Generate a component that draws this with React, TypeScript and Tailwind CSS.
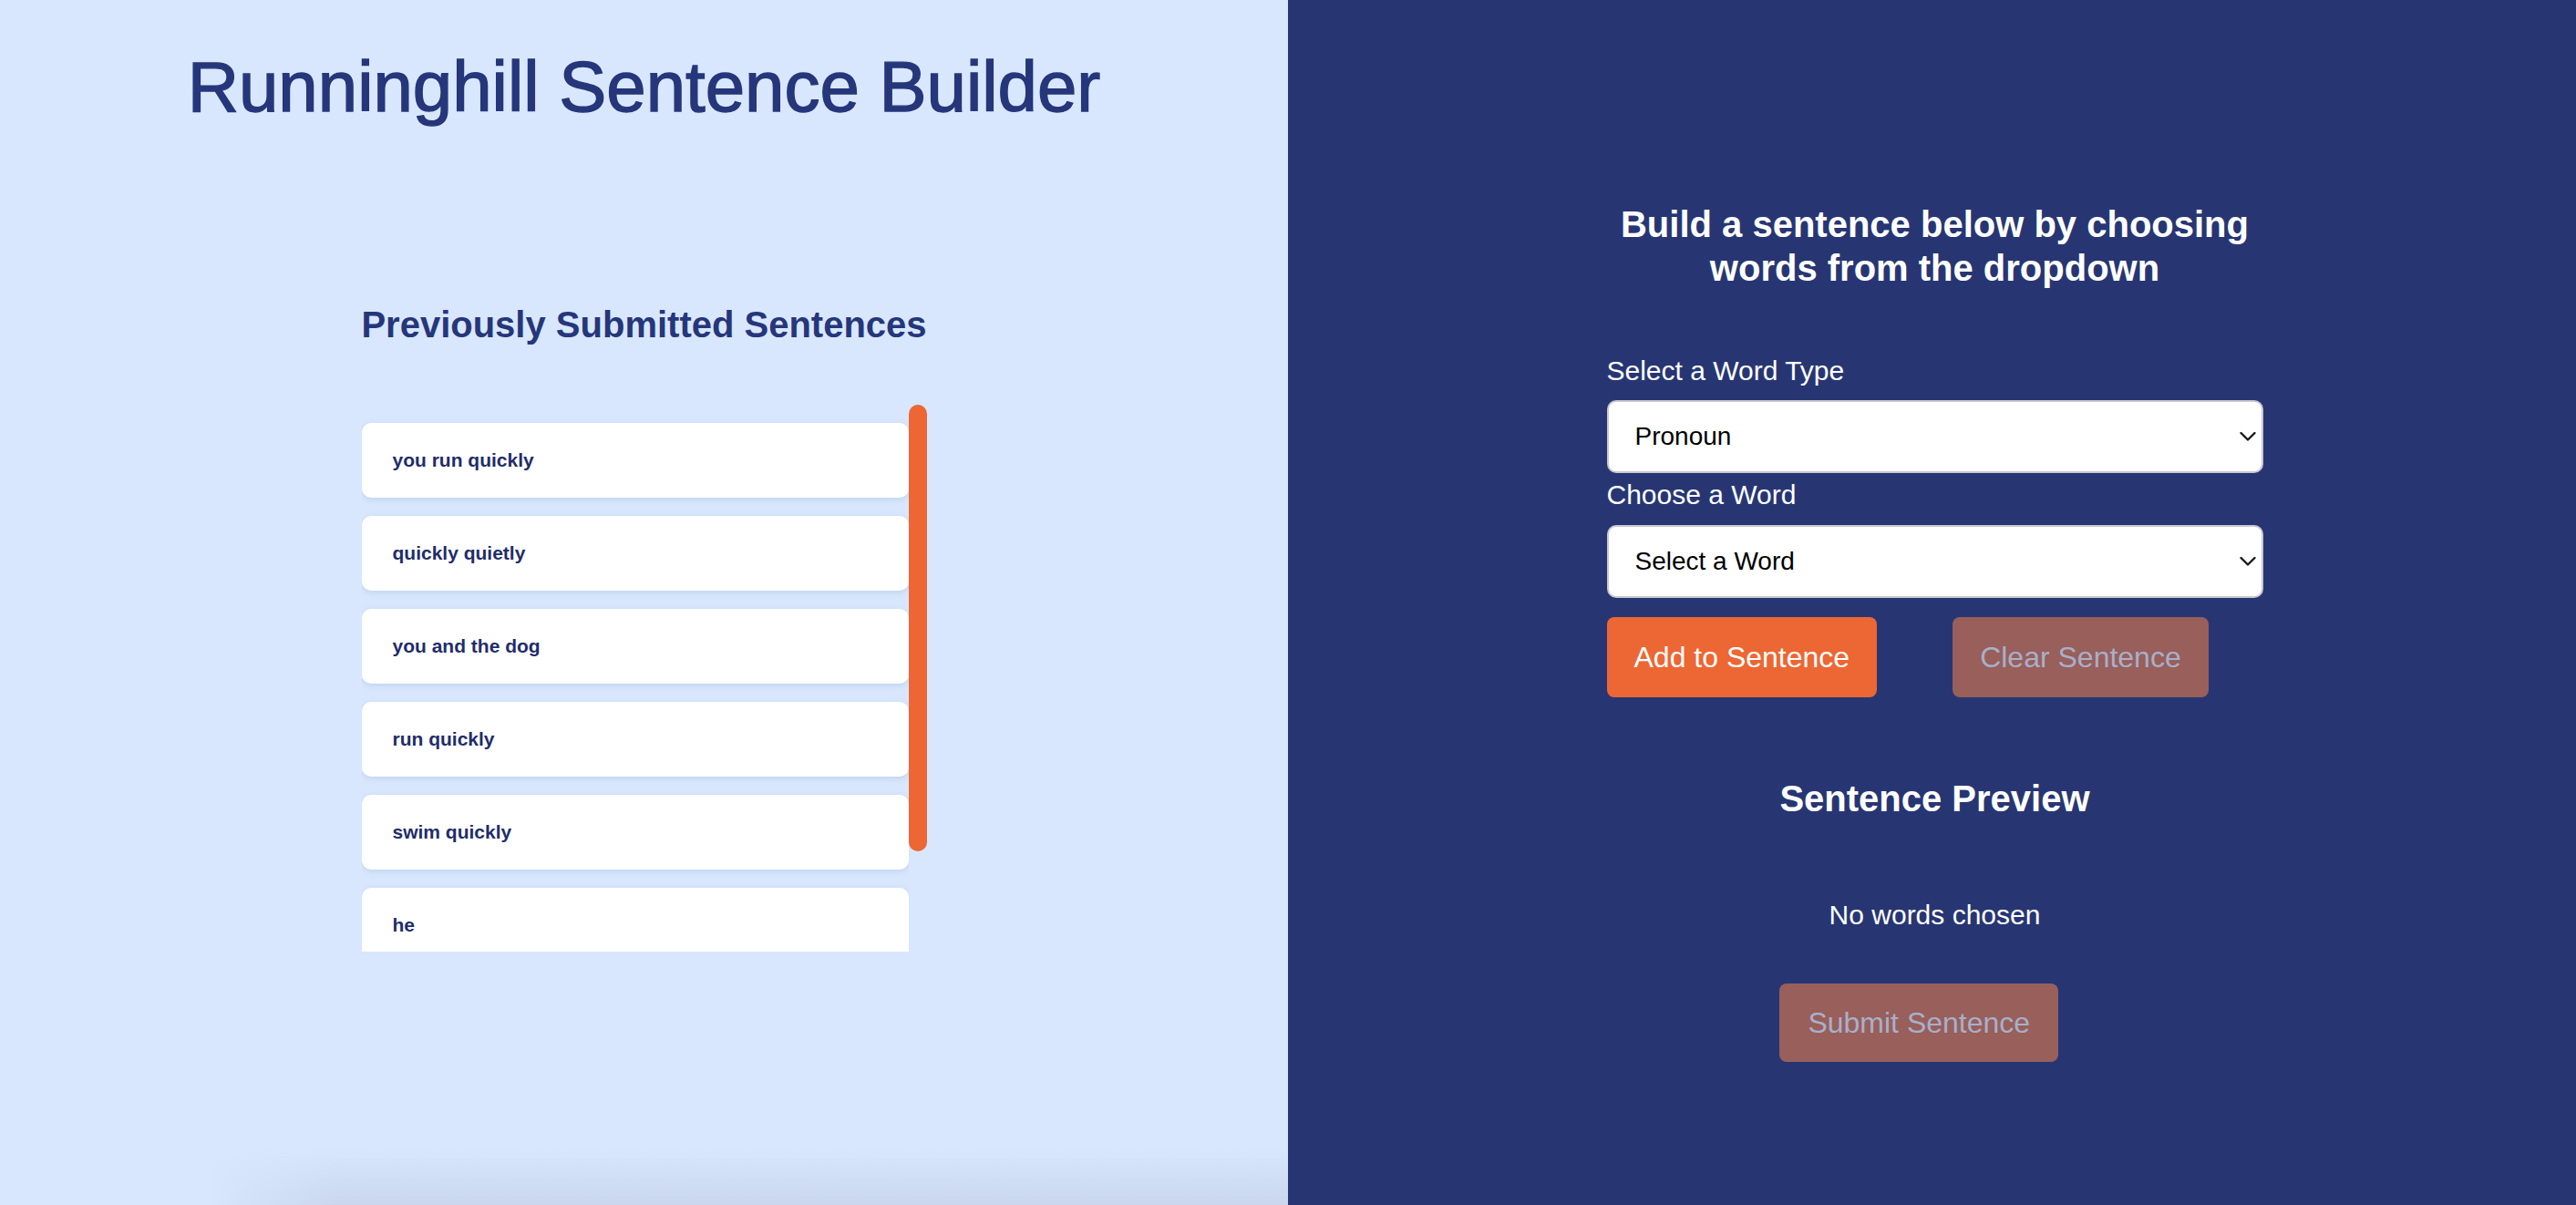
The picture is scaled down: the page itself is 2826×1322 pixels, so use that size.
import { useState } from 'react';

const submitted = ['you run quickly', 'quickly quietly', 'you and the dog', 'run quickly', 'swim quickly', 'he'];

const wordTypes = ['Pronoun', 'Noun', 'Verb', 'Adverb', 'Adjective', 'Conjunction'];

function Chevron() {
  return (
    <svg
      className="pointer-events-none absolute right-[8px] top-1/2 -translate-y-1/2"
      width="18"
      height="11"
      viewBox="0 0 18 11"
      fill="none"
    >
      <path d="M1.5 1.5 L9 9 L16.5 1.5" stroke="#1a1a1a" strokeWidth="2.4" strokeLinecap="round" strokeLinejoin="round" />
    </svg>
  );
}

function Dropdown({ value, options, onChange }: { value: string; options: string[]; onChange: (v: string) => void }) {
  return (
    <div className="relative w-full">
      <select
        value={value}
        onChange={(e) => onChange(e.target.value)}
        className="h-[80px] w-full appearance-none rounded-[10px] border-2 border-[#c9c9cf] bg-white pl-[29px] text-[28px] text-black outline-none"
      >
        {options.map((o) => (
          <option key={o} value={o}>
            {o}
          </option>
        ))}
      </select>
      <Chevron />
    </div>
  );
}

export default function App() {
  const [wordType, setWordType] = useState('Pronoun');
  const [word, setWord] = useState('Select a Word');

  return (
    <div className="flex h-screen w-full overflow-hidden font-['Liberation_Sans',Arial,sans-serif]">
      {/* left side: history */}
      <div className="flex h-full w-1/2 flex-col items-center bg-[#d8e7fd]">
        <h1 className="pt-[56px] text-center text-[78px] leading-none text-[#26367a] [-webkit-text-stroke:1.4px_#26367a]">
          Runninghill Sentence Builder
        </h1>
        <h2 className="mt-[202px] text-[40px] font-bold leading-none text-[#26367a]">Previously Submitted Sentences</h2>
        <div className="mt-[68px] flex h-[600px] w-[620px]">
          <div className="flex h-full w-[600px] flex-col gap-[20px] overflow-hidden pt-[20px]">
            {submitted.map((s) => (
              <div
                key={s}
                className="flex h-[82px] w-full shrink-0 items-center rounded-[10px] bg-white px-[34px] text-[21px] font-bold text-[#1f2d6b] shadow-[0_2px_6px_rgba(120,150,200,0.25)]"
              >
                {s}
              </div>
            ))}
          </div>
          <div className="w-[20px]">
            <div className="h-[490px] w-full rounded-full bg-[#ec6733]" />
          </div>
        </div>
        <div className="mt-auto ml-[230px] h-[60px] self-stretch bg-gradient-to-b from-transparent to-[#c9d6ee] [mask-image:linear-gradient(to_right,transparent,black_140px)]" />
      </div>

      {/* right side: builder */}
      <div className="flex h-full w-1/2 flex-col items-center bg-[#273673] pl-[6px] text-white">
        <div className="flex w-[720px] flex-col">
          <h2 className="pt-[222px] text-center text-[40px] font-bold leading-[48px]">
            Build a sentence below by choosing words from the dropdown
          </h2>
          <label className="mt-[71px] mb-[14px] text-[30px] leading-[36px]">Select a Word Type</label>
          <Dropdown value={wordType} options={wordTypes} onChange={setWordType} />
          <label className="mt-[6px] mb-[15px] text-[30px] leading-[36px]">Choose a Word</label>
          <Dropdown value={word} options={['Select a Word', 'I', 'you', 'he', 'she', 'we', 'they']} onChange={setWord} />
          <div className="mt-[21px] flex gap-[83px]">
            <button className="h-[88px] rounded-[8px] bg-[#ec6733] px-[30px] text-[32px] text-white">Add to Sentence</button>
            <button disabled className="h-[88px] rounded-[8px] bg-[#985f5b] px-[30px] text-[32px] text-[#a9afca]">
              Clear Sentence
            </button>
          </div>
        </div>

        <div className="mt-[91px] flex w-fit flex-col">
          <h2 className="text-[40px] font-bold leading-none">Sentence Preview</h2>
          <p className="mt-[93px] text-center text-[30px] leading-none">No words chosen</p>
          <button
            disabled
            className="mt-[60px] h-[86px] self-start rounded-[8px] bg-[#985f5b] px-[31px] text-[32px] text-[#a9afca]"
          >
            Submit Sentence
          </button>
        </div>
      </div>
    </div>
  );
}
